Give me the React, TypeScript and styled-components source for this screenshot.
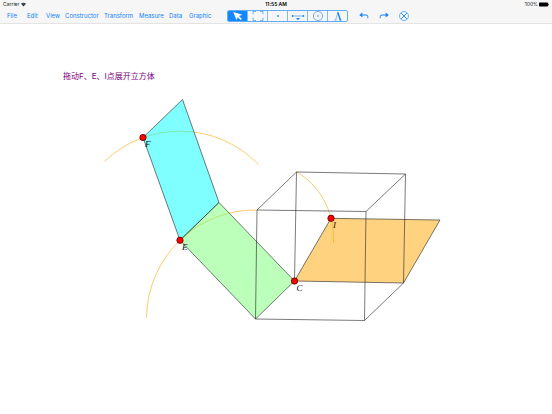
import React, { useState } from "react";
import styled, { createGlobalStyle } from "styled-components";

const GlobalStyle = createGlobalStyle`
  * { box-sizing: border-box; }
  body {
    margin: 0;
    background: #fff;
    font-family: Inter, "Noto Sans CJK SC", sans-serif;
  }
`;

const Page = styled.div`
  min-height: 100vh;
  display: flex;
  flex-direction: column;
`;

const Header = styled.header`
  background: #f6f6f6;
  border-bottom: 1px solid #e4e4e4;
`;

const StatusBar = styled.div`
  display: grid;
  grid-template-columns: 1fr auto 1fr;
  align-items: center;
  height: 9px;
  padding: 0 3px;
  font-size: 5px;
  line-height: 9px;
  color: #222;
`;

const StatusGroup = styled.div<{ $end?: boolean }>`
  display: flex;
  align-items: center;
  gap: ${(p) => (p.$end ? "1px" : "2px")};
  justify-content: ${(p) => (p.$end ? "flex-end" : "flex-start")};
`;

const Clock = styled.time`
  font-weight: 600;
  color: #000;
`;

const Toolbar = styled.div`
  display: flex;
  align-items: center;
  height: 14px;
  padding-left: 7px;
`;

const Menu = styled.nav`
  display: flex;
  flex: none;
  width: 220px;
`;

const MenuButton = styled.button<{ $width: number }>`
  flex: none;
  width: ${(p) => p.$width}px;
  padding: 0;
  border: 0;
  background: none;
  color: #1482fa;
  font: 6px/12px Inter, sans-serif;
  text-align: left;
  white-space: nowrap;
`;

const Segments = styled.div`
  display: flex;
  flex: none;
  width: 121px;
  height: 12px;
  border: 1px solid #62adfa;
  border-radius: 2px;
  overflow: hidden;
`;

const Segment = styled.button<{ $active: boolean }>`
  display: flex;
  flex: 1;
  align-items: center;
  justify-content: center;
  min-width: 0;
  padding: 0;
  border: 0;
  background: ${(p) => (p.$active ? "#1287ff" : "transparent")};
  color: ${(p) => (p.$active ? "#fff" : "#1c87fa")};
  & + & {
    border-left: 1px solid #7dbcfb;
  }
`;

const Actions = styled.div`
  display: flex;
  gap: 8px;
  padding-left: 10px;
`;

const ActionButton = styled.button`
  display: flex;
  align-items: center;
  justify-content: center;
  width: 12px;
  height: 12px;
  padding: 0;
  border: 0;
  background: none;
  color: #1482fa;
`;

const Canvas = styled.main`
  flex: 1;
`;

const Caption = styled.h1`
  margin: 0;
  padding: 46px 63px 0;
  color: #800080;
  font: 400 8px/12px Inter, "Noto Sans CJK SC", sans-serif;
`;

const Figure = styled.svg`
  display: block;
  width: 100%;
  height: auto;
`;

const PointLabel = styled.text`
  font: italic 9px "Liberation Serif", serif;
  fill: #111;
`;

const Icon = ({ children, width = 12 }: { children: React.ReactNode; width?: number }) => (
  <svg width={width} height="10" viewBox={`0 0 ${width} 10`} fill="none" stroke="currentColor" strokeWidth="0.6" aria-hidden="true">
    {children}
  </svg>
);

const menus = [
  { label: "File", width: 20 },
  { label: "Edit", width: 19 },
  { label: "View", width: 19 },
  { label: "Constructor", width: 39 },
  { label: "Transform", width: 35 },
  { label: "Measure", width: 30 },
  { label: "Data", width: 20 },
  { label: "Graphic", width: 26 },
];

const tools = [
  { name: "Select", icon: <Icon><path d="M1.2 1 10.4 3.8 7 5.1 9.9 8 8.7 9.1 5.8 6.2 4.5 9Z" fill="currentColor" stroke="none" /></Icon> },
  { name: "Marquee", icon: <Icon><path d="M1 3.3V.5H4M8 .5h3v2.8M11 6.7v2.8H8M4 9.5H1V6.7" /></Icon> },
  { name: "Point", icon: <Icon><circle cx="6" cy="5" r="0.9" fill="currentColor" stroke="none" /></Icon> },
  { name: "Segment", icon: <Icon width={14}><path d="M1 5h12" /><circle cx="1.6" cy="5" r="0.9" fill="currentColor" stroke="none" /><circle cx="12.4" cy="5" r="0.9" fill="currentColor" stroke="none" /><path d="M5 7h4L7 9.2Z" fill="currentColor" stroke="none" /></Icon> },
  { name: "Circle", icon: <Icon><circle cx="6" cy="5" r="4.6" /><circle cx="6" cy="5" r="0.8" fill="currentColor" stroke="none" /></Icon> },
  { name: "Text", icon: <Icon><path d="M2.5 9.2h2.2M3.6 9.2 6 1.2M7 9.2h3" strokeWidth="0.5" /><path d="M5.6.9h.8L9.3 9.2H7.7L5.4 2.4Z" fill="currentColor" stroke="none" /></Icon> },
];

const points = [
  { name: "F", x: 143, y: 137.5 },
  { name: "E", x: 180, y: 240.3 },
  { name: "I", x: 331, y: 218.3 },
  { name: "C", x: 294.5, y: 281 },
];

export default function App() {
  const [tool, setTool] = useState("Select");

  return (
    <Page>
      <GlobalStyle />
      <Header>
        <StatusBar>
          <StatusGroup>
            <span>Carrier</span>
            <svg width="5" height="5" viewBox="0 0 6 5" aria-label="Wi-Fi">
              <path d="M0 1.5Q3-1 6 1.5L3 5Z" fill="#222" />
              <path d="M.7 2.2Q3 .4 5.3 2.2M1.6 3.3Q3 2.2 4.4 3.3" fill="none" stroke="#f6f6f6" strokeWidth="0.3" />
            </svg>
          </StatusGroup>
          <Clock>11:55 AM</Clock>
          <StatusGroup $end>
            <span>100%</span>
            <svg width="10" height="5" viewBox="0 0 10 5" aria-label="Battery full">
              <rect x="0" y="0.5" width="9" height="4" rx="0.7" />
              <rect x="9.3" y="1.7" width="0.7" height="1.6" />
            </svg>
          </StatusGroup>
        </StatusBar>
        <Toolbar>
          <Menu>
            {menus.map((m) => (
              <MenuButton key={m.label} $width={m.width}>{m.label}</MenuButton>
            ))}
          </Menu>
          <Segments>
            {tools.map((t) => (
              <Segment key={t.name} $active={tool === t.name} aria-label={t.name} aria-pressed={tool === t.name} onClick={() => setTool(t.name)}>
                {t.icon}
              </Segment>
            ))}
          </Segments>
          <Actions>
            <ActionButton aria-label="Undo">
              <Icon><path d="M3 4h5Q9.8 4 9.8 5.6V7.2" strokeWidth="1" /><path d="M1.2 4 4.4 1.6v4.8Z" fill="currentColor" stroke="none" /></Icon>
            </ActionButton>
            <ActionButton aria-label="Redo">
              <Icon><path d="M9 4H4Q2.2 4 2.2 5.6V7.2" strokeWidth="1" /><path d="M10.8 4 7.6 1.6v4.8Z" fill="currentColor" stroke="none" /></Icon>
            </ActionButton>
            <ActionButton aria-label="Clear">
              <Icon><circle cx="6" cy="5" r="4.5" /><path d="m3.2 2.2 5.6 5.6M8.8 2.2 3.2 7.8" strokeWidth="0.9" /></Icon>
            </ActionButton>
          </Actions>
        </Toolbar>
      </Header>
      <Canvas>
        <Caption>拖动F、E、I点展开立方体</Caption>
        <Figure viewBox="0 82 552 250" role="img" aria-label="Unfolding cube">
          <g fill="none" stroke="#ffc45c" strokeWidth="0.9">
            <path d="M104.5 161.5A109 109 0 0 1 258.5 164.5" />
            <path d="M146.5 317.5A109 109 0 0 1 257 210" />
            <path d="M296.5 172C318 184 335 210 333.5 243" />
          </g>
          <g stroke="#222" strokeWidth="0.6" strokeLinejoin="round">
            <path d="M143 137.5 182.5 99.5 219 202.5 180 240.3Z" fill="#00ffff" fillOpacity="0.5" />
            <path d="M180 240.3 219 202.5 294.5 281 255.5 319Z" fill="#78ff78" fillOpacity="0.5" />
            <path d="M331 218.3 440 220 403.5 283 294.5 281Z" fill="#ffa500" fillOpacity="0.5" />
            <path fill="none" d="M257 210 366 211.5 364.5 320.5 255.5 319ZM257 210 296.5 172 405.5 174 366 211.5M296.5 172 294.5 281M405.5 174 403.5 283 364.5 320.5" />
          </g>
          {points.map((p) => (
            <g key={p.name}>
              <circle cx={p.x} cy={p.y} r="3.2" fill="#ff0000" stroke="#400" strokeWidth="0.7" />
              <PointLabel x={p.x + 2} y={p.y + 9.5}>{p.name}</PointLabel>
            </g>
          ))}
        </Figure>
      </Canvas>
    </Page>
  );
}
